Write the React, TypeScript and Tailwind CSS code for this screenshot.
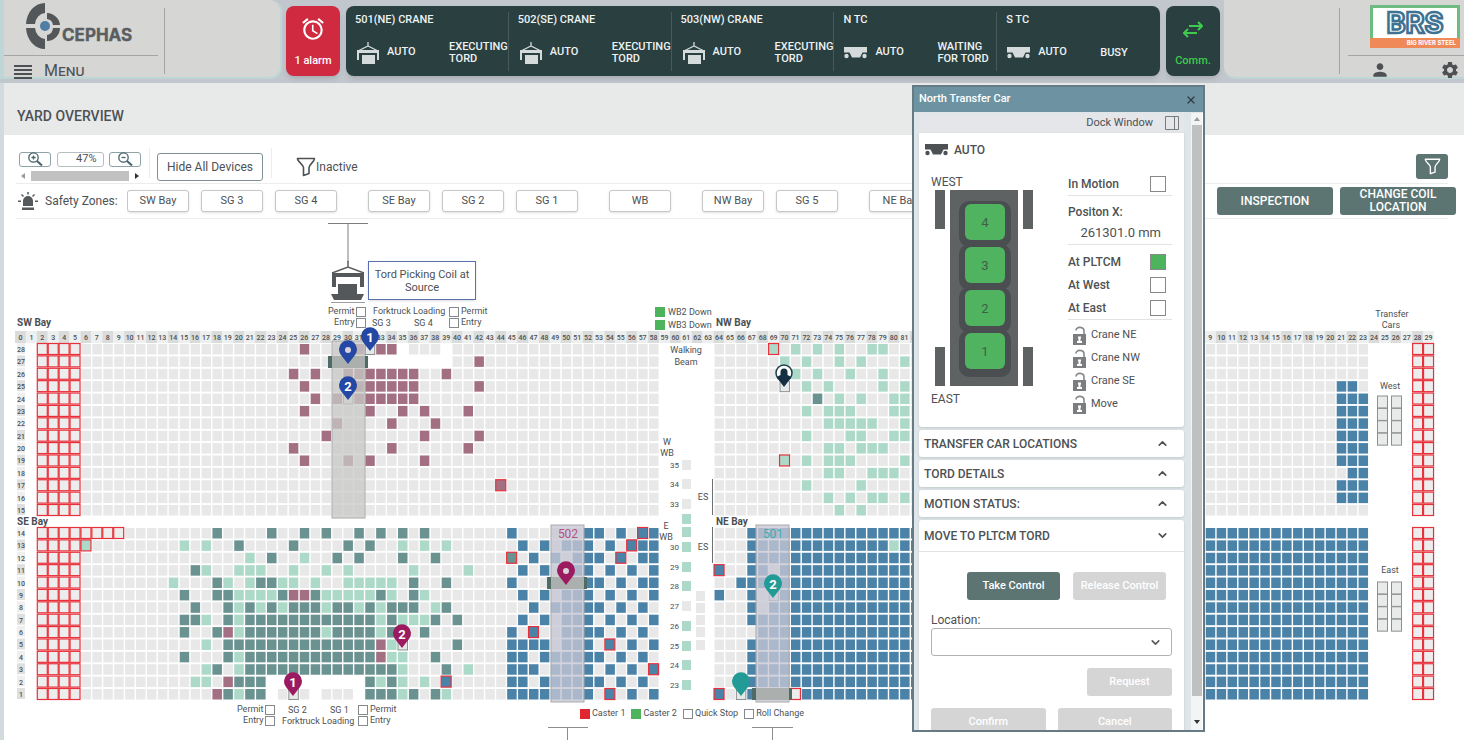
import React from 'react';
import { X, ChevronUp, ChevronDown } from 'lucide-react';
import { MdAlarm, MdPerson, MdSettings } from 'react-icons/md';

type CellSpec = Record<number, string>;

interface Device {
  name: string;
  kind: 'crane' | 'car';
  status: string;
}

const DEVICES: Device[] = [
  { name: '501(NE) CRANE', kind: 'crane', status: 'EXECUTING TORD' },
  { name: '502(SE) CRANE', kind: 'crane', status: 'EXECUTING TORD' },
  { name: '503(NW) CRANE', kind: 'crane', status: 'EXECUTING TORD' },
  { name: 'N TC', kind: 'car', status: 'WAITING FOR TORD' },
  { name: 'S TC', kind: 'car', status: 'BUSY' },
];

const ZONES = [['SW Bay', 'SG 3', 'SG 4'], ['SE Bay', 'SG 2', 'SG 1'], ['WB'], ['NW Bay', 'SG 5'], ['NE Bay']];

// Yard geometry
const MAP_LEFT = 15;
const COLS = 130;
const COL_W = 1419 / COLS;
const ROW_H = 161 / 13;
const TOP_ROW_Y = 130;
const BOTTOM_ROW_Y = 314;

// m/g/t/b = coil colour, upper case = red outline, E = empty with red outline,
// x = no cell, o = selected cell
const COLORS: Record<string, string> = {
  '.': '#e8e8e8',
  m: '#a36f82',
  g: '#addac8',
  t: '#6a9291',
  b: '#4b82a8',
  e: '#eeeded',
  o: '#e6e8e8',
};

const CELLS: CellSpec = {
  28: '26m 31m 32o 33-34m 35x 39x 69G 71g 73g 75g 78-79g',
  27: '32-39x 42m 70g 72g 75g 77g 81g',
  26: '25m 27m 30-36m 39m 71g 73g 76g 79g',
  25: '26m 31-36m 42m 70o 72g 74g 79g 81g 121-122b',
  24: '27m 29m 30o 31-36m 73t 75g 77g 80-81g 121-123b',
  23: '26m 32m 35m 37m 41m 72g 74-76g 80-81g 121-123b',
  22: '29m 34m 38m 74-78g 81g 121-123b',
  21: '28m 37m 42m 72g 76-77g 80-81g 121-123b',
  20: '25m 34m 41m 74-75g 77-79g 121-123b',
  19: '26m 30m 32m 37m 70G 72g 74-76g 81g 121-123b',
  18: '74-75g 78-80g 122-123b',
  17: '44M 72g 77g 121-123b',
  16: '74g 76g 78-79g 81g 121-123b',
  15: '75g 77g',
  14: '6-9E 18t 23t 26t 28t 31t 33t 35t 37t 45b 52-53b 55b 57B 58b 67-123b',
  13: '6G 15g 17g 20t 25t 30t 32t 35g 37g 39g 46b 48b 50-52b 54b 56B 57-58b 67-123b 80g',
  12: '21g 23t 26g 29t 31t 35t 38t 45T 47b 49b 51-53b 55B 57-58b 67-123b',
  11: '16t 17g 20-22g 25g 28g 30g 36g 41g 46b 48b 50-52b 54b 56b 58b 64B 67-123b 69.',
  10: '14g 18t 19g 21g 22-23t 24-25g 27g 30-34g 36t 39t 45b 49-53b 55b 57-58b 66-123b',
  9: '15t 18-19t 20-23g 24t 25-26m 27t 28-32g 33t 34g 36t 37g 46b 48b 50-52b 54b 56b 58b 64b 67-123b 68. 69o',
  8: '16t 19t 20g 21t 22g 23t 24g 25-27t 28g 29-30t 31g 32t 33g 34-36t 38g 39t 47b 49-53b 55b 57b 67-123b 68.',
  7: '15-16t 17g 19t 20g 21-32t 33g 34t 35-37g 38t 40t 46b 48b 50-52b 54b 56b 58b 67-123b',
  6: '15t 18t 19m 20g 21-27t 28g 29-32t 33g 34t 37t 45b 47B 50-53b 55b 57b 68-123b',
  5: '17g 19-32t 33m 34g 35o 40t 45-48b 50-52b 54B 56b 58b 67-123b',
  4: '15t 19t 20g 21-32t 33m 34-35g 38t 45-46b 48-53b 55b 57b 67-123b',
  3: '17g 18t 20g 21-34t 35g 39t 41g 45-47b 49-52b 54b 56b 58B 67-123b',
  2: '16-17g 19m 20-22t 23-31x 32t 33g 34t 35g 37g 39B 45-46b 48-53b 55b 57b 67-123b',
  1: '18m 19t 20g 21-22t 23x 25o 27x 31x 32-34t 35g 36t 38t 39g 45-52b 54B 56b 58b 64B 66o 67-123b 71E',
};

const colX = (col: number) => MAP_LEFT + COL_W * (col + 0.5);
const rowY = (row: number) => (row > 14 ? TOP_ROW_Y + (28 - row) * ROW_H : BOTTOM_ROW_Y + (14 - row) * ROW_H);

const buildRow = (row: number) => {
  const cells: string[] = Array(COLS).fill('x');
  cells.fill('E', 2, 6);
  cells.fill('.', 6, 59);
  cells.fill('.', 64, 124);
  cells.fill('E', 128, 130);
  CELLS[row].split(' ').forEach((part) => {
    const [from, to] = part.slice(0, -1).split('-').map(Number);
    cells.fill(part.slice(-1), from, (to ?? from) + 1);
  });
  return cells;
};

const ROWS = Array.from({ length: 28 }, (_, i) => 28 - i);

const CraneIcon = () => (
  <svg width="24" height="24" viewBox="0 0 24 24" fill="none" className="shrink-0">
    <path d="M12 1v4M2 10l10-5 10 5" stroke="#d5dada" strokeWidth="1.3" />
    <path d="M1 9h22v10h-2v-7H3v7H1z" fill="#d5dada" />
    <path d="M6 14h13v9H6z" fill="#d5dada" />
  </svg>
);

const CarIcon = () => (
  <svg width="23" height="12" viewBox="0 0 23 12" fill="currentColor" className="shrink-0">
    <path d="M0 0h23v5.500h-4.500l-2.500 5H8l-2.500-5H0z" />
    <circle cx="2.500" cy="9" r="2.200" />
    <circle cx="20.500" cy="9" r="2.200" />
  </svg>
);

const FunnelIcon = ({ size }: { size: number }) => (
  <svg width={size} height={size} viewBox="0 0 20 20" fill="none" stroke="currentColor" strokeWidth="1.6">
    <path d="M1.5 1.5h17c0 3.500-5.500 6-5.500 9v6l-5.500 2V10.500c0-3-6-5.500-6-9z" strokeLinejoin="round" />
  </svg>
);

const MagnifierIcon = ({ plus }: { plus?: boolean }) => (
  <svg width="16" height="14" viewBox="0 0 16 14" fill="none" stroke="#47636a" strokeWidth="1.300">
    <circle cx="6.500" cy="5.500" r="4.700" />
    <path d="M10 9l5 4.500" strokeWidth="2" />
    <path d={plus ? 'M4.500 5.500h4M6.500 3.500v4' : 'M4.500 5.500h4'} />
  </svg>
);

const LockIcon = () => (
  <svg width="13" height="19" viewBox="0 0 13 19" fill="none" className="shrink-0">
    <path d="M3 4.500C3 0 11 .5 11 5v4" stroke="#85888a" strokeWidth="1.600" />
    <path d="M0 8h13v11H0z" fill="#7b7e80" />
    <path d="M5 10.500h3v2H7.500v2.500H9V17H4v-2h1.500v-2.500H5z" fill="#fff" />
  </svg>
);

const SirenIcon = () => (
  <svg width="20" height="19" viewBox="0 0 20 19" fill="#55595b">
    <path d="M5 14V9a5 5 0 0110 0v5zM4 15.500h12V18H4z" />
    <path d="M9.300 0h1.500v2.500H9.300zM3 3l1-1 2 2-1 1zM17 3l-1-1-2 2 1 1zM0 8.500h3V10H0zM17 8.500h3V10h-3z" />
  </svg>
);

const CephasLogo = () => (
  <svg width="112" height="50" viewBox="0 0 112 50">
    <g fill="#54575a">
      <path d="M20 3v10a11 12 0 00-10 11H1A19 22 0 0120 3z" />
      <path d="M1 28h9a11 12 0 0010 11v10A19 22 0 011 28z" />
      <path d="M22 13a14 13 0 0113 12h-7a7 7 0 00-6-6z" />
      <path d="M35 28a14 13 0 01-13 13v-6a7 7 0 006-7z" />
    </g>
    <circle cx="20" cy="26" r="5" fill="#4f7fa5" />
    <text x="37" y="41" fontFamily="Inter, Liberation Sans, sans-serif" fontSize="17" fontWeight="700" fill="#5b5e61" stroke="#5b5e61" strokeWidth=".4">CEPHAS</text>
  </svg>
);

const BrsLogo = () => (
  <svg width="90" height="43" viewBox="0 0 90 43">
    <rect width="90" height="43" fill="#6dbb80" />
    <rect x="3" y="3" width="84" height="30" fill="#fdfefe" />
    <rect y="33" width="90" height="10" fill="#ef8a58" />
    <text x="45" y="28" textAnchor="middle" fontFamily="Inter, sans-serif" fontSize="29" fontWeight="700" fill="#f5fafc" stroke="#3f7191" strokeWidth="2.500">BRS</text>
    <text x="86" y="40" textAnchor="end" fontFamily="Inter, sans-serif" fontSize="6" fontWeight="700" fill="#fff">BIG RIVER STEEL</text>
  </svg>
);

const Header = () => (
  <header className="flex h-[83px] shrink-0 bg-[#c2c7ce] text-[#4d5154]">
    <div className="flex w-[286px] shrink-0 pr-1">
      <div className="mb-1 flex flex-1 rounded-r-xl border-2 border-l-4 border-t-0 border-[#bfd6d6] bg-[#d6d6d5]">
        <div className="w-[154px]">
          <div className="flex h-[56px] justify-start border-b border-[#a3a5a6] pl-[21px]">
            <CephasLogo />
          </div>
          <button className="ml-[10px] mt-[5px] flex items-center gap-3 text-[16px] leading-5 [font-variant:small-caps]">
            <svg width="18" height="15" viewBox="0 0 18 15" fill="#4d5154">
              <path d="M0 1h18v2H0zM0 5h18v2H0zM0 9h18v2H0zM0 13h18v2H0z" />
            </svg>
            Menu
          </button>
        </div>
        <div className="ml-[6px] mt-2 h-[66px] border-l border-[#a3a5a6]" />
      </div>
    </div>
    <div className="flex flex-1 gap-[6px] pt-[6px] text-[11px] font-medium">
      <button className="flex h-[70px] w-[54px] flex-col items-center justify-between rounded-lg bg-[#d02a40] pb-2 pt-[10px] leading-[14px] text-white shadow-md">
        <MdAlarm size={26} />
        1 alarm
      </button>
      <div className="grid h-[70px] flex-1 grid-cols-5 rounded-lg bg-[#293f40] py-[6px] text-[#eef2f2] shadow-md">
        {DEVICES.map((device, i) => (
          <section key={device.name} className={`min-w-0 pl-[9px] ${i < 4 ? 'border-r border-[#48595a]' : ''}`}>
            <h2 className="leading-4">{device.name}</h2>
            <div className="flex h-[43px] items-center pt-[6px]">
              <div className="flex w-8 shrink-0 pl-px text-[#d5dada]">
                {device.kind === 'crane' ? <CraneIcon /> : <CarIcon />}
              </div>
              <span className="w-[62px] shrink-0">AUTO</span>
              <span className="w-[58px] shrink-0 leading-3">{device.status}</span>
            </div>
          </section>
        ))}
      </div>
      <button className="flex h-[70px] w-[54px] flex-col items-center justify-between rounded-lg bg-[#293f40] pb-2 pt-[15px] leading-[14px] text-[#3fca4d] shadow-md">
        <svg width="20" height="17" viewBox="0 0 20 17" fill="none" stroke="currentColor" strokeWidth="2">
          <path d="M6 5h13M15 1l4 4-4 4M14 12H1M5 8l-4 4 4 4" />
        </svg>
        Comm.
      </button>
    </div>
    <div className="flex w-[244px] shrink-0 pl-1">
      <div className="mb-1 flex flex-1 justify-end rounded-bl-xl border-b-2 border-[#bfd6d6] bg-[#d6d6d5]">
        <div className="mt-2 h-[66px] border-l border-[#a3a5a6]" />
        <div className="ml-2 w-[116px]">
          <div className="flex h-[56px] justify-end border-b border-[#a3a5a6] pr-[4px] pt-[5px]">
            <BrsLogo />
          </div>
          <div className="flex justify-between pl-[22px] pr-1 pt-1">
            <button aria-label="User"><MdPerson size={20} /></button>
            <button aria-label="Settings"><MdSettings size={20} /></button>
          </div>
        </div>
      </div>
    </div>
  </header>
);

const Toolbar = () => (
  <div className="mx-4 flex h-[49px] shrink-0 items-center border-b border-[#ececec]">
    <div className="ml-[3px] w-[122px] pt-[15px]">
      <div className="flex justify-between">
        <button aria-label="Zoom in" className="flex h-[15px] w-8 items-center justify-center rounded-[3px] border border-[#8fa2a5]">
          <MagnifierIcon plus />
        </button>
        <input aria-label="Zoom level" defaultValue="47%" className="h-[15px] w-[47px] rounded-[3px] border border-[#b7bebf] pr-[6px] text-right text-[11px]" />
        <button aria-label="Zoom out" className="flex h-[15px] w-8 items-center justify-center rounded-[3px] border border-[#8fa2a5]">
          <MagnifierIcon />
        </button>
      </div>
      <div className="mt-1 flex h-[11px] items-center justify-between px-[2px]">
        <svg width="4" height="6" viewBox="0 0 4 6" fill="#9a9a9a"><path d="M4 0v6L0 3z" /></svg>
        <div className="h-[10px] w-[98px] bg-[#c1c1c1]" />
        <svg width="4" height="6" viewBox="0 0 4 6" fill="#333"><path d="M0 0v6l4-3z" /></svg>
      </div>
    </div>
    <div className="ml-2 mt-2 h-[30px] border-l border-[#ececec]" />
    <button className="ml-[7px] mt-[15px] h-7 w-[106px] rounded-[3px] border border-[#7d9193] text-[12px]">Hide All Devices</button>
    <div className="ml-2 mt-2 h-[30px] border-l border-[#ececec]" />
    <button className="ml-[24px] mt-[15px] flex items-center text-[12px]">
      <FunnelIcon size={20} />
      Inactive
    </button>
    <button aria-label="Filter" className="ml-auto mt-[15px] flex h-[25px] w-8 items-center justify-center rounded-[3px] bg-[#5c7472] text-white">
      <FunnelIcon size={17} />
    </button>
  </div>
);

const SafetyZones = () => (
  <div className="mx-4 flex h-[35px] shrink-0 items-center border-b border-[#ececec]">
    <div className="ml-[2px] flex w-[109px] shrink-0 items-center gap-[7px] whitespace-nowrap text-[12px]">
      <SirenIcon />
      Safety Zones:
    </div>
    <div className="flex min-w-0 flex-1 gap-[31px] overflow-hidden py-1">
      {ZONES.map((group) => (
        <div key={group[0]} className="flex gap-3">
          {group.map((zone) => (
            <button key={zone} className="h-[22px] w-[62px] shrink-0 rounded-[3px] border border-[#c4c8c9] bg-white text-[11px] shadow">
              {zone}
            </button>
          ))}
        </div>
      ))}
    </div>
    <div className="-mr-2 flex h-7 gap-[7px] text-[12px] font-medium leading-[13px] text-white">
      <button className="w-[116px] rounded-[3px] bg-[#5c7472]">INSPECTION</button>
      <button className="w-[116px] rounded-[3px] bg-[#5c7472]">CHANGE COIL LOCATION</button>
    </div>
  </div>
);

interface PinProps {
  x: number;
  y: number;
  color: string;
  label?: string;
  ring?: boolean;
}

// x, y is the centre of the pin's head
const Pin = ({ x, y, color, label, ring }: PinProps) => (
  <g transform={`translate(${x} ${y})`}>
    <path d="M0 14L-7 5A9 9 0 1 1 7 5z" fill={color} />
    {ring && <circle r="3" fill="#d8d3dc" />}
    {label && <text y="5" textAnchor="middle" fontSize="13" fontWeight="700" fill="#fff">{label}</text>}
  </g>
);

interface StripProps {
  x: number;
  y: number;
  trolley: number;
  color: string;
}

const CraneStrip = ({ x, y, trolley, color }: StripProps) => (
  <g>
    <rect x={x} y={y} width="33" height="177" fill={color} stroke="#a9aaab" />
    <rect x={x - 4} y={trolley} width="40" height="12" fill="#4f6b68" />
    <rect x={x} y={trolley} width="33" height="12" fill="#abafae" />
  </g>
);

const BEAM: [number, string, string][] = [
  [246, '35', '.'], [265, '34', '.'], [285, '33', '.'], [300, '', 'g'], [313, '', 'g'], [328, '30', 'g'], [348, '29', 'g'],
  [367, '28', 'g'], [387, '27', '.'], [407, '26', 'g'], [427, '25', 'g'], [446, '24', 'g'], [466, '23', 'g'],
];

const YardDrawing = () => (
  <svg width="1464" height="521" viewBox="0 0 1464 521" fontFamily="Roboto, sans-serif" fill="#4b4f52">
    {Array.from({ length: COLS }, (_, i) => (
      <g key={i}>
        <rect x={colX(i) - COL_W / 2} y="112" width={COL_W} height="12" fill={i % 2 ? '#eeefef' : '#dadbdb'} />
        <text x={colX(i)} y="121" textAnchor="middle" fontSize="7" fontWeight="500">{i > 99 ? i - 100 : i}</text>
      </g>
    ))}
    {ROWS.map((row) => (
      <g key={row}>
        <rect x="17" y={rowY(row) - 6} width="8" height="11" fill={row % 2 ? '#dedfdf' : '#efefef'} />
        <text x="21" y={rowY(row) + 3} textAnchor="middle" fontSize="7" fontWeight="500">{row}</text>
        {buildRow(row).map((code, col) => {
          if (code === 'x') return null;
          const outlined = code >= 'A' && code <= 'Z';
          return outlined ? (
            <rect key={col} x={colX(col) - 5} y={rowY(row) - 5.5} width="10" height="11" fill={COLORS[code.toLowerCase()]} stroke="#e8303a" strokeWidth="1.2" />
          ) : (
            <rect key={col} x={colX(col) - 4.5} y={rowY(row) - 5} width="9.500" height="10.500" fill={COLORS[code]} stroke={code === 'o' ? '#8b9092' : 'none'} />
          );
        })}
      </g>
    ))}

    {BEAM.map(([y, label, code]) => (
      <g key={y}>
        <rect x="682" y={y - 5} width="9" height="10" fill={COLORS[code]} />
        <text x="679" y={y + 3} textAnchor="end" fontSize="8">{label}</text>
      </g>
    ))}
    {[377, 389, 401, 413, 426].map((y) => (
      <rect key={y} x="696" y={y - 5} width="9" height="10" fill="#e8e8e8" />
    ))}
    <path d="M712.500 260v36M712.500 308v36" stroke="#6d7072" />
    {[1377, 1391].map((x) =>
      [177, 363].map((y) =>
        [0, 1, 2, 3].map((i) => (
          <rect key={`${x}-${y}-${i}`} x={x + 0.5} y={y + i * ROW_H} width="10" height="12" fill="#e9ebeb" stroke="#8c8f90" />
        ))
      )
    )}
    <rect x="655" y="88" width="10" height="10" fill="#4db35d" />
    <rect x="655" y="101" width="10" height="10" fill="#4db35d" />

    <g fontSize="9">
      <text x="668" y="96">WB2 Down</text>
      <text x="668" y="109">WB3 Down</text>
      <g textAnchor="middle">
        <text x="686" y="134">Walking</text>
        <text x="686" y="146">Beam</text>
        <text x="667" y="226">W</text>
        <text x="667" y="237">WB</text>
        <text x="666" y="310">E</text>
        <text x="666" y="321">WB</text>
        <text x="703" y="281">ES</text>
        <text x="703" y="331">ES</text>
        <text x="1392" y="98">Transfer</text>
        <text x="1391" y="109">Cars</text>
        <text x="1390" y="170">West</text>
        <text x="1390" y="354">East</text>
      </g>
      <text x="373" y="95">Forktruck Loading</text>
      <text x="372" y="107">SG 3</text>
      <text x="414" y="107">SG 4</text>
      <text x="282" y="505">Forktruck Loading</text>
      <text x="288" y="494">SG 2</text>
      <text x="330" y="494">SG 1</text>
    </g>
    <g fontSize="10" fontWeight="700">
      <text x="17" y="107">SW Bay</text>
      <text x="17" y="306">SE Bay</text>
      <text x="716" y="107">NW Bay</text>
      <text x="716" y="306">NE Bay</text>
    </g>

    {/* crane 503 with its hoist seen from the side */}
    <CraneStrip x={332} y={122} trolley={137} color="rgba(200,201,198,.75)" />
    <g stroke="#5b5e60" fill="none">
      <path d="M328 4.500h40M348 5v38" strokeOpacity=".8" />
      <path d="M332 54l16-6 16 6M348 42v6" strokeWidth="1.500" />
      <path d="M331 83.500h34" strokeOpacity=".6" />
    </g>
    <path d="M332 54h32v14h-4v-10h-24v10h-4zM338 65h19v10h7l-3 6h-27l-3-6h7z" fill="#55585a" />
    <Pin x={348} y={131} color="#2448a4" ring />
    <Pin x={370} y={118} color="#2448a4" label="1" />
    <Pin x={348} y={167} color="#2448a4" label="2" />

    <CraneStrip x={551} y={306} trolley={358} color="rgba(199,198,212,.78)" />
    <text x="568" y="319" textAnchor="middle" fontSize="12" fill="#b0537f">502</text>
    <Pin x={566} y={352} color="#9c1a60" ring />
    <CraneStrip x={756} y={306} trolley={469} color="rgba(199,198,212,.78)" />
    <text x="773" y="319" textAnchor="middle" fontSize="12" fill="#3fa9ac">501</text>
    <Pin x={773} y={365} color="#229b96" label="2" />
    <Pin x={741} y={463} color="#229b96" />
    <Pin x={293} y={463} color="#9c1a60" label="1" />
    <Pin x={402} y={415} color="#9c1a60" label="2" />
    <g transform="translate(784 154)">
      <circle r="8" fill="#fff" stroke="#1f3c4c" strokeWidth="1.500" />
      <path d="M-3.500-1a3.500 3.500 0 017 0v3l4 2-7.500 10-7.500-10 4-2z" fill="#142f42" />
    </g>
    <path d="M548 508.500h40M567.500 508v13M752 508.500h41M772.500 508v13" stroke="#8b8e90" />
  </svg>
);

const Permits = ({ id, flip }: { id: string; flip?: boolean }) => (
  <div className="flex flex-col">
    {['Permit', 'Entry'].map((name) => (
      <label key={name} className={`flex h-[11px] items-center gap-[2px] ${flip ? '' : 'flex-row-reverse'}`}>
        <input type="checkbox" name={`${id}-${name}`} className="size-[10px] appearance-none border border-[#85898b] bg-white" />
        {name}
      </label>
    ))}
  </div>
);

const YardMap = () => (
  <div className="relative min-h-0 flex-1 overflow-hidden text-[9px]">
    <YardDrawing />
    <div className="absolute left-[368px] top-[42px] flex h-[39px] w-[108px] items-center justify-center border border-[#5a70ae] bg-white px-1 text-center text-[11px] leading-[13px] shadow-sm">
      Tord Picking Coil at Source
    </div>
    <div className="absolute left-[328px] top-[87px]"><Permits id="sg3" /></div>
    <div className="absolute left-[449px] top-[87px]"><Permits id="sg4" flip /></div>
    <div className="absolute left-[237px] top-[485px]"><Permits id="sg2" /></div>
    <div className="absolute left-[358px] top-[485px]"><Permits id="sg1" flip /></div>
    <div className="absolute left-[580px] top-[489px] flex gap-[6px] leading-[11px]">
      <div className="flex items-center gap-[2px]"><span className="size-[10px] bg-[#e0262f]" />Caster 1</div>
      <div className="flex items-center gap-[2px]"><span className="size-[10px] bg-[#4db35d]" />Caster 2</div>
      <div className="flex items-center gap-[2px]"><span className="size-[10px] border border-[#85898b]" />Quick Stop</div>
      <div className="flex items-center gap-[2px]"><span className="size-[10px] border border-[#85898b]" />Roll Change</div>
    </div>
  </div>
);

const TransferCarDrawing = () => (
  <svg width="100" height="196" viewBox="0 0 100 196" fontFamily="Roboto, sans-serif">
    <g fill="#5f6263">
      <path d="M1 0h10v39H1zM89 0h10v39H89zM1 157h10v39H1zM89 157h10v39H89z" />
      <rect x="16" width="68" height="196" />
    </g>
    {[4, 3, 2, 1].map((slot, i) => (
      <rect key={slot} x="25" y={11 + i * 43} width="52" height="46" rx="10" fill="#4b4e50" />
    ))}
    <rect x="25" y="145" width="52" height="42" rx="10" fill="#4b4e50" />
    {[4, 3, 2, 1].map((slot, i) => (
      <g key={slot}>
        <rect x="31" y={14 + i * 43} width="40" height="36" rx="6" fill="#4fb360" />
        <text x="51" y={37 + i * 43} textAnchor="middle" fontSize="13" fill="#3f5f48">{slot}</text>
      </g>
    ))}
  </svg>
);

const CheckRow = ({ label, on }: { label: string; on?: boolean }) => (
  <label className="flex h-[23px] items-center justify-between pr-[6px] text-[12px] font-medium">
    {label}
    <input type="checkbox" defaultChecked={on} className="size-4 appearance-none border border-[#85898b] bg-white checked:bg-[#4db35d]" />
  </label>
);

const Section = ({ title }: { title: string }) => (
  <button className="flex h-[27px] shrink-0 items-center justify-between rounded-[3px] bg-white pl-[5px] pr-[15px] text-[12px] font-medium shadow">
    {title}
    <ChevronUp size={13} strokeWidth={3} />
  </button>
);

const TransferCarWindow = () => (
  <div className="absolute left-[912px] top-[85px] flex h-[647px] w-[293px] flex-col overflow-hidden border-2 border-[#657a83] bg-[#dfe6e9]">
    <div className="flex h-[25px] shrink-0 items-center justify-between bg-[#6d93a3] pl-[5px] pr-[6px] text-[11px] font-medium text-white">
      North Transfer Car
      <button aria-label="Close"><X size={12} strokeWidth={2.5} color="#2e3d44" /></button>
    </div>
    <div className="flex min-h-0 flex-1 pt-px">
      <div className="flex min-w-0 flex-1 flex-col gap-[3px] overflow-hidden pl-[5px] pr-[7px]">
        <div className="-mb-[3px] flex h-5 shrink-0 items-center justify-end gap-3 bg-[#e4e6ea] pr-[5px] text-[11px]">
          Dock Window
          <button aria-label="Dock">
            <svg width="14" height="14" viewBox="0 0 14 14" fill="none" stroke="#777b7d">
              <path d="M.5.5h13v13H.5zM9.500.5v13" />
            </svg>
          </button>
        </div>
        <div className="flex h-[294px] shrink-0 flex-col rounded-b-[3px] bg-white shadow">
          <div className="flex h-[34px] items-center gap-[6px] pl-[6px] text-[12px] font-medium">
            <CarIcon />
            AUTO
          </div>
          <div className="flex">
            <div className="w-[149px] pl-3 pt-[6px] text-[12px]">
              <div className="h-[17px] leading-[18px]">WEST</div>
              <div className="pl-[3px]"><TransferCarDrawing /></div>
              <div className="pt-[5px] leading-4">EAST</div>
            </div>
            <div className="w-[104px] pt-[5px]">
              <div className="border-b border-[#e2e2e2]"><CheckRow label="In Motion" /></div>
              <div className="h-[49px] border-b border-[#e2e2e2] pt-2 text-[12px] font-medium leading-4">
                Positon X:
                <div className="pr-[11px] pt-[5px] text-right text-[13px] font-normal leading-4">261301.0 mm</div>
              </div>
              <div className="border-b border-[#e2e2e2] pt-[5px]">
                <CheckRow label="At PLTCM" on />
                <CheckRow label="At West" />
                <CheckRow label="At East" />
              </div>
              <div className="pl-[5px] pt-[4px] text-[11px]">
                {['Crane NE', 'Crane NW', 'Crane SE', 'Move'].map((name) => (
                  <div key={name} className="flex h-[23px] items-center gap-[5px]">
                    <LockIcon />
                    {name}
                  </div>
                ))}
              </div>
            </div>
          </div>
        </div>
        <Section title="TRANSFER CAR LOCATIONS" />
        <Section title="TORD DETAILS" />
        <Section title="MOTION STATUS:" />
        <div className="flex shrink-0 flex-col rounded-[3px] bg-white shadow">
          <button className="flex h-8 items-center justify-between border-b border-[#e2e2e2] pl-[5px] pr-[15px] text-[12px] font-medium">
            MOVE TO PLTCM TORD
            <ChevronDown size={13} strokeWidth={3} />
          </button>
          <div className="flex flex-col px-3 pt-5 text-[11px] font-medium text-white">
            <div className="flex justify-end gap-[13px] pr-[6px]">
              <button className="h-7 w-[93px] rounded-[3px] bg-[#5c7472]">Take Control</button>
              <button className="h-7 w-[93px] rounded-[3px] bg-[#d5d5d5]">Release Control</button>
            </div>
            <label htmlFor="location" className="pt-3 text-[12px] font-normal leading-4 text-[#4d5154]">Location:</label>
            <div className="relative">
              <select id="location" className="h-7 w-full appearance-none rounded-[3px] border border-[#b0b3b4] bg-white" />
              <ChevronDown size={13} strokeWidth={3} color="#55595b" className="pointer-events-none absolute right-[10px] top-2" />
            </div>
            <button className="mt-3 h-7 w-[85px] self-end rounded-[3px] bg-[#d5d5d5]">Request</button>
            <div className="mt-3 flex gap-3 pb-3">
              <button className="h-7 flex-1 rounded-[3px] bg-[#d5d5d5]">Confirm</button>
              <button className="h-7 flex-1 rounded-[3px] bg-[#d5d5d5]">Cancel</button>
            </div>
          </div>
        </div>
      </div>
      <div className="flex w-3 shrink-0 flex-col items-center border-r border-white bg-[#f3f4f4] pt-1">
        <svg width="6" height="4" viewBox="0 0 6 4" fill="#9a9a9a"><path d="M0 4h6L3 0z" /></svg>
        <div className="mb-6 mt-1 w-[10px] flex-1 bg-[#bfc0c0]" />
        <svg width="6" height="4" viewBox="0 0 6 4" fill="#333" className="mb-[6px]"><path d="M0 0h6L3 4z" /></svg>
      </div>
    </div>
  </div>
);

const App: React.FC = () => {
  return (
    <div className="relative flex h-screen flex-col overflow-hidden bg-white font-[Roboto,sans-serif] text-[#4d5154]">
      <Header />
      <main className="flex min-h-0 flex-1 flex-col border-l-4 border-[#d3dbdf]">
        <h1 className="flex h-[52px] shrink-0 items-center bg-[#e8e9e9] pl-[13px] pt-[14px] text-[14px] font-medium">YARD OVERVIEW</h1>
        <div className="-ml-1 flex min-h-0 flex-1 flex-col">
          <Toolbar />
          <SafetyZones />
          <YardMap />
        </div>
      </main>
      <TransferCarWindow />
    </div>
  );
};

export default App;
